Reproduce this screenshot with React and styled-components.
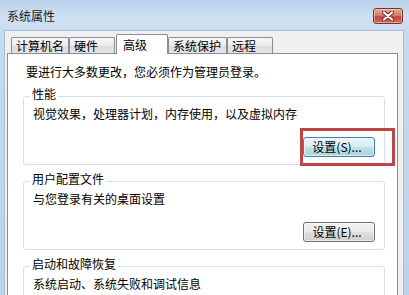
import React from "react";
import styled, { createGlobalStyle } from "styled-components";

const GlobalStyle = createGlobalStyle`
  html, body {
    margin: 0;
    padding: 0;
    background: #c4d8ee;
  }
  body {
    font-family: "Noto Sans CJK SC", "Liberation Sans", sans-serif;
    font-size: 12px;
    color: #000;
  }
`;

const tabs = [
  { label: "计算机名", width: 58 },
  { label: "硬件", width: 46 },
  { label: "高级", width: 52, active: true },
  { label: "系统保护", width: 59 },
  { label: "远程", width: 46 },
];

const groups = [
  {
    title: "性能",
    text: "视觉效果，处理器计划，内存使用，以及虚拟内存",
    button: "设置(S)...",
    focused: true,
  },
  {
    title: "用户配置文件",
    text: "与您登录有关的桌面设置",
    button: "设置(E)...",
  },
  {
    title: "启动和故障恢复",
    text: "系统启动、系统失败和调试信息",
  },
];

const CloseIcon = () => (
  <svg width="14" height="10" viewBox="0 0 14 10">
    <path d="M3 1.5 L11 8.5 M11 1.5 L3 8.5" stroke="#6b2a25" strokeWidth="4" strokeLinecap="round" />
    <path d="M3 1.5 L11 8.5 M11 1.5 L3 8.5" stroke="#fff" strokeWidth="2.2" strokeLinecap="round" />
  </svg>
);

const App = () => {
  return (
    <>
      <GlobalStyle />
      <Window>
        <TitleBar>
          <Title>系统属性</Title>
          <CloseButton>
            <CloseIcon />
          </CloseButton>
        </TitleBar>
        <Client>
          <TabRow>
            {tabs.map((tab, index) => (
              <Tab key={index} $width={tab.width} $active={tab.active}>
                {tab.label}
              </Tab>
            ))}
          </TabRow>
          <Panel>
            <Intro>要进行大多数更改，您必须作为管理员登录。</Intro>
            {groups.map((group, index) => (
              <Group key={index}>
                <Legend>{group.title}</Legend>
                <Description>{group.text}</Description>
                {group.button && (
                  <ButtonRow>
                    <ButtonWrap>
                      <Button $focused={group.focused}>{group.button}</Button>
                      {group.focused && <Highlight />}
                    </ButtonWrap>
                  </ButtonRow>
                )}
              </Group>
            ))}
          </Panel>
        </Client>
      </Window>
    </>
  );
};

const Window = styled.div`
  width: 409px;
  height: 295px;
  overflow: hidden;
  display: flex;
  flex-direction: column;
  background: linear-gradient(180deg, #b9d0ea 0%, #d0e0f2 18px, #c6d9ef 40px, #bcd2eb 100%);
`;

const TitleBar = styled.div`
  height: 30px;
  flex: none;
  display: flex;
  align-items: flex-start;
  padding: 0 6px 0 7px;
`;

const Title = styled.div`
  margin-top: 9px;
  line-height: 14px;
  color: #1a1a1a;
`;

const CloseButton = styled.div`
  margin-top: 8px;
  margin-left: auto;
  width: 30px;
  height: 16px;
  box-sizing: border-box;
  border: 1px solid #7a3430;
  border-radius: 3px;
  background: linear-gradient(180deg, #e3a89e 0%, #d37e70 45%, #bf4a3c 55%, #cc6a5a 100%);
  box-shadow: inset 0 0 0 1px rgba(255, 220, 210, 0.5);
  display: flex;
  align-items: center;
  justify-content: center;
`;

const Client = styled.div`
  flex: 1;
  margin: 0 5px 0 4px;
  background: #f0f0f0;
  border: 1px solid #a9bdd6;
  border-bottom: none;
  padding-top: 3px;
  display: flex;
  flex-direction: column;
  min-height: 0;
`;

const TabRow = styled.div`
  display: flex;
  align-items: flex-end;
  padding-left: 6px;
  position: relative;
  z-index: 1;
`;

const Tab = styled.div`
  box-sizing: border-box;
  width: ${(p) => p.$width}px;
  height: ${(p) => (p.$active ? 20 : 16)}px;
  margin-left: ${(p) => (p.$active ? 1 : 0)}px;
  margin-bottom: ${(p) => (p.$active ? -1 : 0)}px;
  border: 1px solid #898c95;
  border-bottom: none;
  border-radius: 2px 2px 0 0;
  padding: ${(p) => (p.$active ? "2px 0 0 6px" : "0 0 0 4px")};
  line-height: 15px;
  white-space: nowrap;
  background: ${(p) =>
    p.$active ? "#fff" : "linear-gradient(180deg, #f6f6f6 0%, #ebebeb 50%, #dddddd 51%, #e4e4e4 100%)"};
`;

const Panel = styled.div`
  flex: 1;
  margin: 0 5px 0 2px;
  background: #fff;
  border: 1px solid #898c95;
  border-bottom: none;
  padding: 11px 12px 0 15px;
`;

const Intro = styled.div`
  line-height: 14px;
  margin-left: 3px;
`;

const Group = styled.div`
  margin-top: 17px;
  border: 1px solid #d5dfe5;
  border-radius: 3px;
  padding: 0 9px 7px 9px;
  & + & {
    margin-top: 16px;
  }
`;

const Legend = styled.div`
  display: table;
  margin: -10px 0 0 -3px;
  padding: 0 2px;
  line-height: 14px;
  background: #fff;
`;

const Description = styled.div`
  margin-top: 6px;
  line-height: 14px;
`;

const ButtonRow = styled.div`
  display: flex;
  justify-content: flex-end;
  margin-top: 16px;
`;

const ButtonWrap = styled.div`
  position: relative;
  display: flex;
`;

const Button = styled.div`
  box-sizing: border-box;
  width: 72px;
  height: 20px;
  border: 1px solid ${(p) => (p.$focused ? "#3c7fb1" : "#707070")};
  border-radius: 3px;
  line-height: 17px;
  text-align: center;
  padding-right: 4px;
  background: ${(p) =>
    p.$focused
      ? "linear-gradient(180deg, #eaf6fb 0%, #d9eff5 45%, #bfe0e8 55%, #a9d3dc 100%)"
      : "linear-gradient(180deg, #f2f2f2 0%, #ebebeb 45%, #dddddd 55%, #cfcfcf 100%)"};
  box-shadow: inset 0 0 0 1px rgba(255, 255, 255, 0.6);
`;

const Highlight = styled.div`
  position: absolute;
  left: -3px;
  top: -9px;
  right: -20px;
  bottom: -9px;
  border: 3px solid #bd4447;
  pointer-events: none;
`;

export default App;
